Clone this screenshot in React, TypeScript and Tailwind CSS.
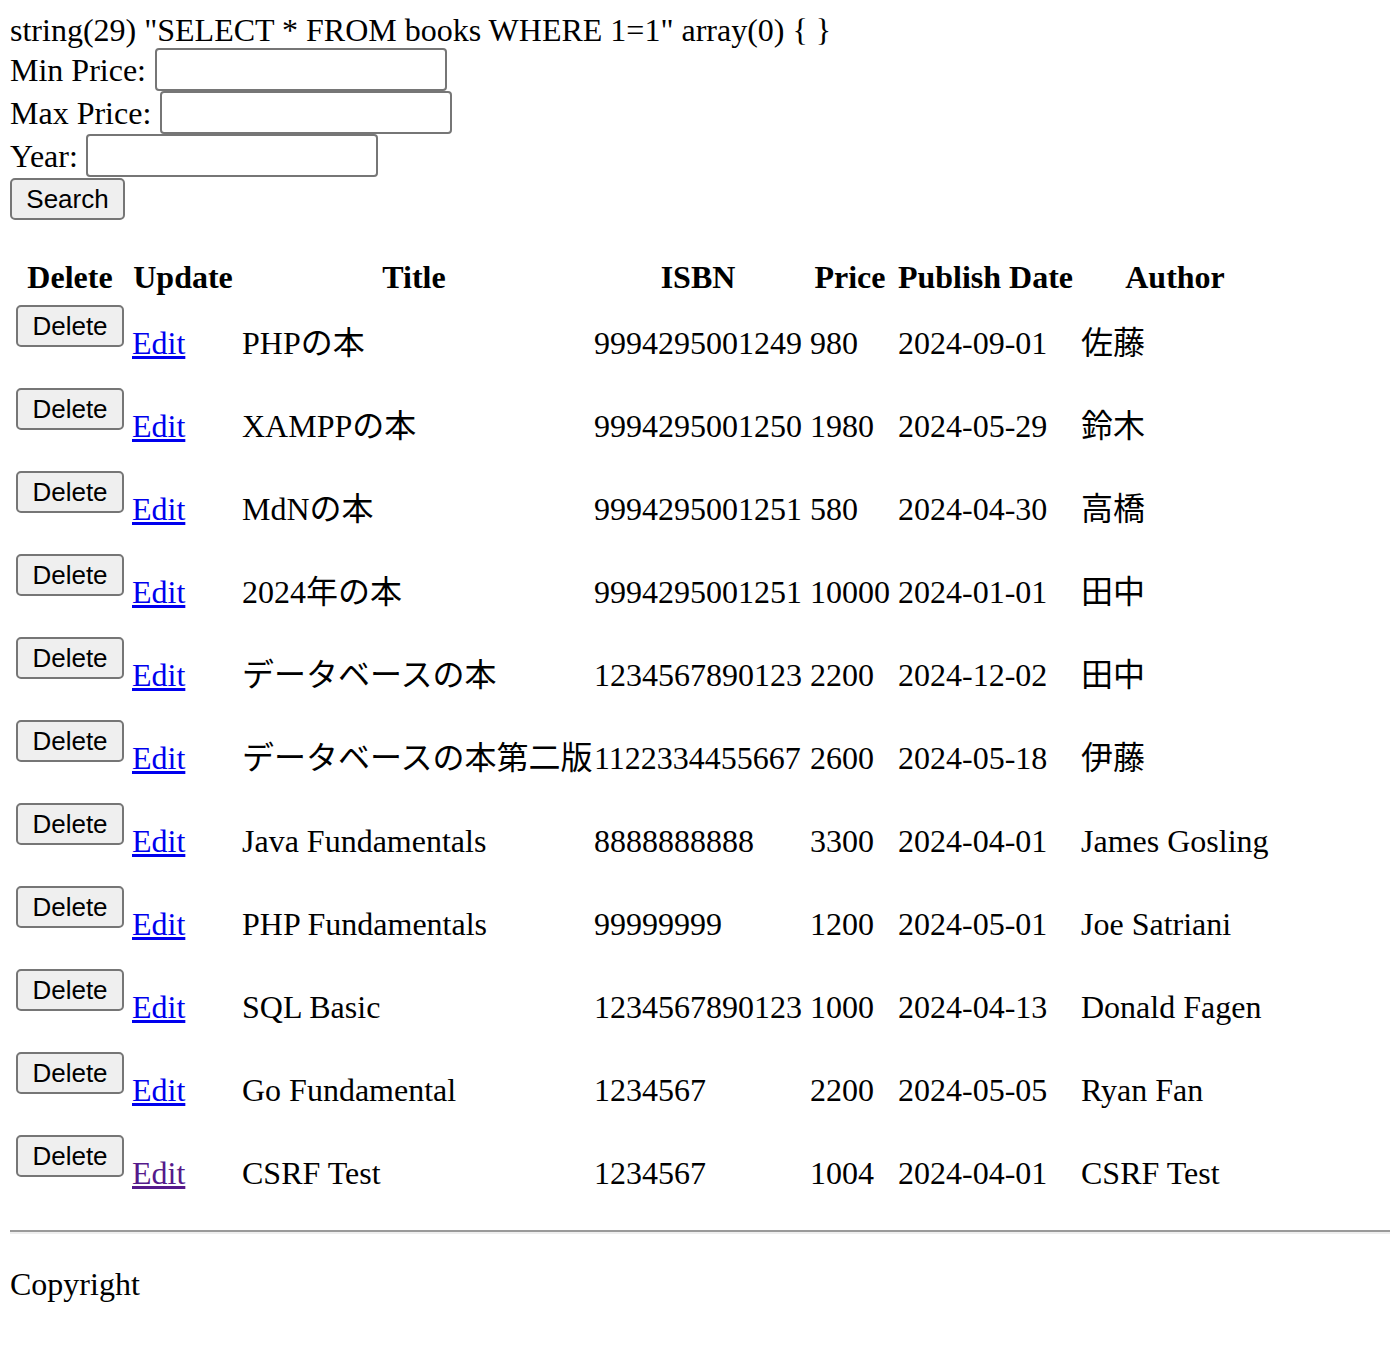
type Book = {
  title: string
  isbn: string
  price: string
  date: string
  author: string
  visited?: boolean
}

const books: Book[] = [
  { title: "PHPの本", isbn: "9994295001249", price: "980", date: "2024-09-01", author: "佐藤" },
  { title: "XAMPPの本", isbn: "9994295001250", price: "1980", date: "2024-05-29", author: "鈴木" },
  { title: "MdNの本", isbn: "9994295001251", price: "580", date: "2024-04-30", author: "高橋" },
  { title: "2024年の本", isbn: "9994295001251", price: "10000", date: "2024-01-01", author: "田中" },
  { title: "データベースの本", isbn: "1234567890123", price: "2200", date: "2024-12-02", author: "田中" },
  { title: "データベースの本第二版", isbn: "1122334455667", price: "2600", date: "2024-05-18", author: "伊藤" },
  { title: "Java Fundamentals", isbn: "8888888888", price: "3300", date: "2024-04-01", author: "James Gosling" },
  { title: "PHP Fundamentals", isbn: "99999999", price: "1200", date: "2024-05-01", author: "Joe Satriani" },
  { title: "SQL Basic", isbn: "1234567890123", price: "1000", date: "2024-04-13", author: "Donald Fagen" },
  { title: "Go Fundamental", isbn: "1234567", price: "2200", date: "2024-05-05", author: "Ryan Fan" },
  { title: "CSRF Test", isbn: "1234567", price: "1004", date: "2024-04-01", author: "CSRF Test", visited: true },
]

const serif = "font-['Liberation_Serif','Noto_Sans_CJK_JP',serif]"
const sans = "font-['Liberation_Sans','Noto_Sans',sans-serif]"

const headers = ["Delete", "Update", "Title", "ISBN", "Price", "Publish Date", "Author"]

function TextInput() {
  return (
    <input
      type="text"
      className="h-[43px] w-[292px] rounded-[4px] border-2 border-[#767676] bg-white"
    />
  )
}

function GrayButton({ label, className }: { label: string; className: string }) {
  return (
    <button
      className={`flex items-center justify-center rounded-[5px] border-2 border-[#767676] bg-[#efefef] text-[26px] leading-none text-black ${sans} ${className}`}
    >
      {label}
    </button>
  )
}

export default function App() {
  return (
    <div className={`${serif} min-h-[1348px] bg-white pt-[12px] text-[32px] text-black`}>
      <div className="pl-[10px]">
        <div className="h-[36px] leading-[36px] whitespace-nowrap">
          string(29) "SELECT * FROM books WHERE 1=1" array(0) {"{ }"}
        </div>

        <div className="flex h-[43px] items-center">
          <span>Min Price:</span>
          <span className="ml-[9px]">
            <TextInput />
          </span>
        </div>
        <div className="flex h-[43px] items-center">
          <span>Max Price:</span>
          <span className="ml-[9px]">
            <TextInput />
          </span>
        </div>
        <div className="flex h-[43px] items-center">
          <span>Year:</span>
          <span className="ml-[8px]">
            <TextInput />
          </span>
        </div>
        <div className="flex h-[43px] items-center">
          <GrayButton label="Search" className="h-[42px] w-[115px]" />
        </div>

        <table className="mt-[31px] w-[1265px] table-fixed border-separate border-spacing-[4px] leading-[36px]">
          <colgroup>
            <col className="w-[112px]" />
            <col className="w-[106px]" />
            <col className="w-[348px]" />
            <col className="w-[212px]" />
            <col className="w-[84px]" />
            <col className="w-[179px]" />
            <col className="w-[192px]" />
          </colgroup>
          <thead>
            <tr className="h-[44px]">
              {headers.map(h => (
                <th key={h} className="p-0 text-center align-middle font-bold whitespace-nowrap">
                  {h}
                </th>
              ))}
            </tr>
          </thead>
          <tbody>
            {books.map((b, i) => (
              <tr key={i} className="h-[79px]">
                <td className="px-[2px] pt-[2px] align-top">
                  <GrayButton label="Delete" className="h-[42px] w-[108px]" />
                </td>
                <td className="px-[2px] align-middle">
                  <a
                    href="#"
                    className={`underline ${b.visited ? "text-[#551a8b]" : "text-[#0000ee]"}`}
                  >
                    Edit
                  </a>
                </td>
                <td className="px-[2px] align-middle whitespace-nowrap">{b.title}</td>
                <td className="px-[2px] align-middle whitespace-nowrap">{b.isbn}</td>
                <td className="px-[2px] align-middle whitespace-nowrap">{b.price}</td>
                <td className="px-[2px] align-middle whitespace-nowrap">{b.date}</td>
                <td className="px-[2px] align-middle whitespace-nowrap">{b.author}</td>
              </tr>
            ))}
          </tbody>
        </table>
      </div>

      <hr className="mt-[14px] ml-[10px] border-t-2 border-b-2 border-t-[#9a9a9a] border-b-[#eeeeee]" />

      <p className="mt-[32px] pl-[10px] leading-[37px]">Copyright</p>
    </div>
  )
}
